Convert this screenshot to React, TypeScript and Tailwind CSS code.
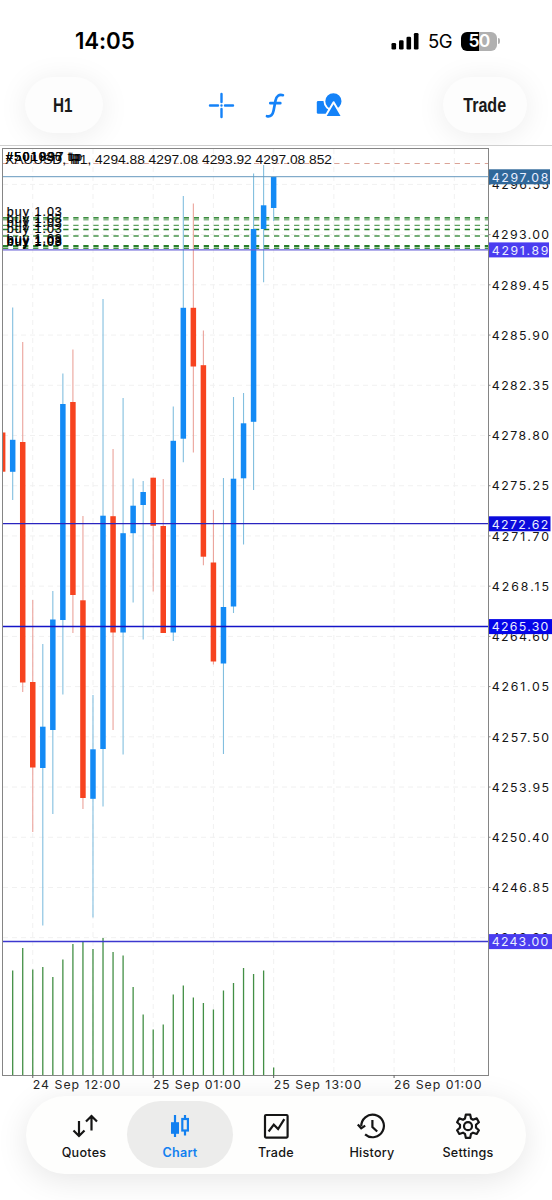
import type { ReactNode } from "react"

interface Candle {
  up: boolean
  high: number
  top: number
  bottom: number
  low: number
  volume: number
}

const c = (up: boolean, high: number, top: number, bottom: number, low: number, volume: number): Candle => ({
  up, high, top, bottom, low, volume,
})

// all values are y positions inside the chart
const candles: Candle[] = [
  c(false, 432.5, 432.5, 471.7, 471.7, 1075),
  c(true, 307.5, 439.8, 471.8, 500, 970.5),
  c(false, 342, 442, 682.5, 692, 948),
  c(false, 600, 682, 767.5, 832, 969.5),
  c(true, 644, 726.7, 768, 925.5, 967),
  c(true, 591, 619.5, 730, 814, 977),
  c(true, 373.5, 404, 620, 694.5, 959.5),
  c(false, 349.5, 402, 595, 633, 944),
  c(false, 516, 600.3, 798, 809, 942),
  c(true, 695, 749.3, 798.8, 917.5, 949),
  c(true, 299, 515.7, 749, 806.5, 938),
  c(false, 449, 516.2, 632.5, 730, 952),
  c(true, 398, 533.2, 632.5, 754.5, 955.5),
  c(true, 478.5, 505.7, 533.2, 602.5, 987),
  c(true, 481, 492, 505, 639.5, 1014.5),
  c(false, 477.7, 477.7, 525.8, 591.5, 1029.5),
  c(false, 479, 526, 633, 633, 1024.5),
  c(true, 406.5, 440.8, 632.5, 641, 994.5),
  c(true, 196, 307.8, 438.7, 462.3, 985.5),
  c(false, 203.5, 307.8, 366.5, 452.5, 997.5),
  c(false, 330.5, 365.2, 556.7, 565.3, 1003),
  c(false, 510, 562.5, 661.5, 664.5, 1009.5),
  c(true, 478, 607, 663.5, 754, 990.5),
  c(true, 397, 478.7, 606.5, 613, 983),
  c(true, 393, 423.3, 478.3, 544.5, 968),
  c(true, 173.5, 229, 421.8, 490, 974),
  c(true, 165, 205.3, 229, 282.3, 970.5),
  c(true, 177, 177, 208, 221, 1067.5),
]

const prices = [
  "4296.55", "4293.00", "4289.45", "4285.90", "4282.35", "4278.80", "4275.25", "4271.70",
  "4268.15", "4264.60", "4261.05", "4257.50", "4253.95", "4250.40", "4246.85", "4243.30",
]

const times = ["24 Sep 12:00", "25 Sep 01:00", "25 Sep 13:00", "26 Sep 01:00"]

const levels = [
  { price: "4297.08", y: 176.7, line: "#6598be", fill: "#30689a", width: 1, tag: 61 },
  { price: "4291.89", y: 249.8, line: "#6a63d8", fill: "#4a3cf0", width: 1.3, tag: 60 },
  { price: "4272.62", y: 523.7, line: "#2a24c0", fill: "#0b0bdc", width: 1.2, tag: 61.5 },
  { price: "4265.30", y: 626.5, line: "#1414c8", fill: "#0505e8", width: 1.5, tag: 63 },
  { price: "4243.00", y: 941.5, line: "#3c38cf", fill: "#4a3cf0", width: 1.5, tag: 63 },
]

const orders = [
  { y: 217.7, width: 1.4, opacity: 0.9 },
  { y: 219.5, width: 1.8, opacity: 0.55 },
  { y: 225.4, width: 1.1, opacity: 0.75 },
  { y: 229.5, width: 1.5, opacity: 1 },
  { y: 236, width: 1.5, opacity: 0.85 },
  { y: 246, width: 1.8, opacity: 1 },
  { y: 248.2, width: 1.6, opacity: 0.85 },
]

const xOf = (i: number) => 2.65 + i * 10.037
const yOf = (i: number) => 184.4 + i * 50.22

function Chart() {
  return (
    <svg className="block h-[950px] w-full shrink-0 font-['Inter',sans-serif]" viewBox="0 146 552 950">
      <defs>
        <clipPath id="plot">
          <rect x="2.5" y="148.5" width="486" height="928" />
        </clipPath>
      </defs>

      {/* grid */}
      <g stroke="#f1f1f1" strokeDasharray="5 4">
        {prices.map((p, i) => <line key={p} x1="3" x2="488" y1={yOf(i)} y2={yOf(i)} />)}
        {[3, 9, 15, 21, 27, 33, 39, 45].map((i) => (
          <line key={i} x1={xOf(i)} x2={xOf(i)} y1="149" y2="1075" />
        ))}
      </g>

      <g clipPath="url(#plot)">
        {/* volumes */}
        <g stroke="#438f45" strokeWidth="1.3">
          {candles.map((d, i) => <line key={i} x1={xOf(i)} x2={xOf(i)} y1={d.volume} y2="1075.5" />)}
        </g>

        {/* open orders */}
        <line x1="3" x2="488" y1="163.5" y2="163.5" stroke="#dba396" strokeWidth="1" strokeDasharray="5.3 4.737" />
        {orders.map((o) => (
          <line
            key={o.y} x1="3" x2="488" y1={o.y} y2={o.y} stroke="#26802a"
            strokeWidth={o.width} opacity={o.opacity} strokeDasharray="5.3 4.737"
          />
        ))}

        {/* candles */}
        {candles.map((d, i) => (
          <g key={i}>
            <line
              x1={xOf(i)} x2={xOf(i)} y1={d.high} y2={d.low}
              stroke={d.up ? "#82bfdf" : "#eba39b"} strokeWidth="1.1"
            />
            <rect
              x={xOf(i) - 2.75} y={d.top} width="5.5" height={d.bottom - d.top}
              fill={d.up ? "#138af5" : "#f7431f"}
            />
          </g>
        ))}
      </g>

      {levels.map((l) => (
        <line key={l.price} x1="3" x2="488" y1={l.y} y2={l.y} stroke={l.line} strokeWidth={l.width} />
      ))}

      <rect x="2.5" y="148.5" width="486" height="927" fill="none" stroke="#858585" strokeWidth="1" />

      {/* price scale */}
      <g fontSize="12.3" fill="#161616">
        {prices.map((p, i) => (
          <g key={p}>
            <line x1="488.5" x2="490.5" y1={yOf(i)} y2={yOf(i)} stroke="#858585" />
            <text x="491.8" y={yOf(i) + 4.7} textLength="57.3">{p}</text>
          </g>
        ))}
        {levels.map((l) => (
          <g key={l.price}>
            <rect x="489" y={l.y - 7.4} width={l.tag} height="15" fill={l.fill} />
            <text x="491.8" y={l.y + 4.8} textLength="56.5" fill="#e9eeff">{l.price}</text>
          </g>
        ))}
      </g>

      {/* time scale */}
      <g fontSize="12.3" fill="#262626">
        {times.map((t, i) => (
          <g key={t}>
            <line x1={xOf(3 + i * 12)} x2={xOf(3 + i * 12)} y1="1075" y2="1078" stroke="#666" />
            <text x={xOf(3 + i * 12)} y="1089.3" textLength="87.5">{t}</text>
          </g>
        ))}
      </g>

      {/* labels */}
      <g className="font-['Liberation_Sans',sans-serif]" fill="#111">
        <text x="5" y="163.8" fontSize="13.4" textLength="327" lengthAdjust="spacingAndGlyphs">
          XAUUSD, H1, 4294.88 4297.08 4293.92 4297.08 852
        </text>
        <g fontSize="12.3" fill="#000">
          {["#501837 tp", "#501997 tp", "#501086 tp"].map((t, i) => (
            <text key={t} x="6" y="161" textLength={76 - i * 1.5}>{t}</text>
          ))}
        </g>
        <g fontSize="12.5" fill="#000" stroke="#000" strokeWidth="0.2">
          {[216, 222.6, 226.8, 233.4, 243.4, 245.6].map((y) => (
            <text key={y} x="6.8" y={y} textLength="55">buy 1.03</text>
          ))}
          <text x="6.8" y="244.5" textLength="55">buy 1.08</text>
        </g>
      </g>
    </svg>
  )
}

function StatusBar() {
  return (
    <div className="flex h-[77px] items-start justify-between pl-[75px] pr-[52px] pt-[28px]">
      <span className="text-[22.3px] font-semibold leading-[26px] tracking-[-0.1px]">14:05</span>
      <div className="flex items-center pt-[2px]">
        <svg className="h-[18px] w-[28px]" viewBox="0 0 28 18">
          <rect x="0.5" y="11" width="4.6" height="6.5" rx="1.3" />
          <rect x="8" y="8.2" width="4.6" height="9.3" rx="1.3" />
          <rect x="15.5" y="4.8" width="4.6" height="12.7" rx="1.3" />
          <rect x="22.9" y="1" width="4.6" height="16.5" rx="1.3" />
        </svg>
        <span className="ml-[9px] w-[33px] text-[18.5px] leading-[22px] tracking-[-0.4px]">5G</span>
        <div className="flex items-center">
          <div className="flex h-[19px] w-[36px] items-center justify-center rounded-[6px] bg-[linear-gradient(90deg,#000_50%,#b0b0b0_50%)] text-[17.5px] font-semibold leading-none tracking-[-0.7px] text-white">
            50
          </div>
          <div className="ml-px h-[6px] w-[2px] rounded-r-full bg-[#b0b0b0]" />
        </div>
      </div>
    </div>
  )
}

const pill =
  "flex h-[56px] items-center justify-center rounded-full bg-[#fdfdfd] font-['Liberation_Sans',sans-serif] text-[20px] font-bold text-[#1a1a1a] shadow-[0_3px_30px_rgba(0,0,0,0.08)]"

function Toolbar() {
  return (
    <div className="flex h-[68px] items-start justify-between pl-[25px] pr-[25px]">
      <button className={`${pill} w-[78px]`}>
        <span className="-ml-[2px] inline-block scale-x-[0.76]">H1</span>
      </button>
      <div className="flex pl-[5px] pt-[15px] text-[#1482f8]">
        <svg className="h-[27px] w-[27px]" viewBox="0 0 27 27" stroke="currentColor" strokeWidth="2.4" strokeLinecap="round">
          <path d="M13.5 2v8M13.5 17v8M2 13.5h8M17 13.5h8M13.5 13.5v.01" />
        </svg>
        <svg className="ml-[29px] h-[27px] w-[24px]" viewBox="0 0 24 27" fill="none" stroke="currentColor" strokeWidth="2.7" strokeLinecap="round">
          <path d="M3 24.2c3.8.8 5.7-1.3 6.6-5.8l1.9-9.8c.9-4.6 3.5-6.5 7.4-5.4M6.3 11.2h10" />
        </svg>
        <svg className="ml-[27px] h-[27px] w-[28px]" viewBox="0 0 28 27" fill="currentColor">
          <path d="M3.2 9H13v12.8H3.2A1.4 1.4 0 0 1 1.8 20.4V10.4A1.4 1.4 0 0 1 3.2 9z" />
          <circle cx="18.4" cy="9.3" r="9" stroke="white" strokeWidth="1.8" />
          <path d="M18.6 10.2 27.3 25.1H9.9z" stroke="white" strokeWidth="2" strokeLinejoin="round" />
        </svg>
      </div>
      <button className={`${pill} w-[84px]`}>
        <span className="-mx-2 inline-block scale-x-[0.805]">Trade</span>
      </button>
    </div>
  )
}

function Tab({ label, active, children }: { label: string; active?: boolean; children: ReactNode }) {
  return (
    <button
      className={
        active
          ? "-mx-[5px] flex h-[67px] w-[106px] flex-col items-center rounded-[34px] bg-[#ececeb] pt-[9px] text-[#1280f0]"
          : "flex h-[67px] w-[96px] flex-col items-center pt-[9px] text-[#151515]"
      }
    >
      <svg className="h-[32px] w-[32px]" viewBox="0 0 32 32" fill="none" stroke="currentColor" strokeWidth="2.2">
        {children}
      </svg>
      <span className={`mt-[3px] text-[12.6px] leading-[16px] tracking-[0.25px] ${active ? "font-semibold" : "font-medium"}`}>
        {label}
      </span>
    </button>
  )
}

function TabBar() {
  return (
    <nav className="mx-[26px] flex h-[78px] w-[500px] shrink-0 justify-center rounded-full bg-[#fefefd] pt-[5px] shadow-[0_6px_32px_rgba(0,0,0,0.10)]">
      <Tab label="Quotes">
        <path d="M11 11v15M5.5 20.5 11 26l5.5-5.5M23.5 20.5V6M18 11.5 23.5 6l5.5 5.5" />
      </Tab>
      <Tab label="Chart" active>
        <path d="M11 5v22M21 5v20.5" />
        <rect x="8.1" y="13.3" width="5.8" height="9.4" fill="currentColor" />
        <rect x="18.3" y="9" width="5.6" height="11.5" fill="#ececeb" />
      </Tab>
      <Tab label="Trade">
        <rect x="5" y="5" width="22.6" height="22.6" rx="1" />
        <path d="m8.6 21.5 5.2-6.8 4.3 4.3 6.2-9.8" />
      </Tab>
      <Tab label="History">
        <path d="M5.3 16.4A11.3 11.3 0 1 1 9.1 24.4M16.4 10v7l4.8 4.5" />
        <path d="m1.8 14.6 3.4 3.7 4-2.7" />
      </Tab>
      <Tab label="Settings">
        <path
          strokeLinejoin="round"
          d="M13.8 4.6h4.4l.8 3.9 2 1.2 3.7-1.3 2.2 3.8-2.9 2.6v2.8l2.9 2.6-2.2 3.8-3.7-1.3-2 1.2-.8 3.9h-4.4l-.8-3.9-2-1.2-3.7 1.3-2.2-3.8 2.9-2.6v-2.8l-2.9-2.6 2.2-3.8 3.7 1.3 2-1.2z"
        />
        <circle cx="16" cy="16.2" r="4" />
      </Tab>
    </nav>
  )
}

export default function App() {
  return (
    <div className="flex h-[1200px] w-[552px] flex-col overflow-hidden bg-white font-['Inter',sans-serif] text-black">
      <header className="h-[146px] shrink-0 overflow-hidden border-b border-[#cfcfcf]">
        <StatusBar />
        <Toolbar />
      </header>
      <Chart />
      <TabBar />
    </div>
  )
}
